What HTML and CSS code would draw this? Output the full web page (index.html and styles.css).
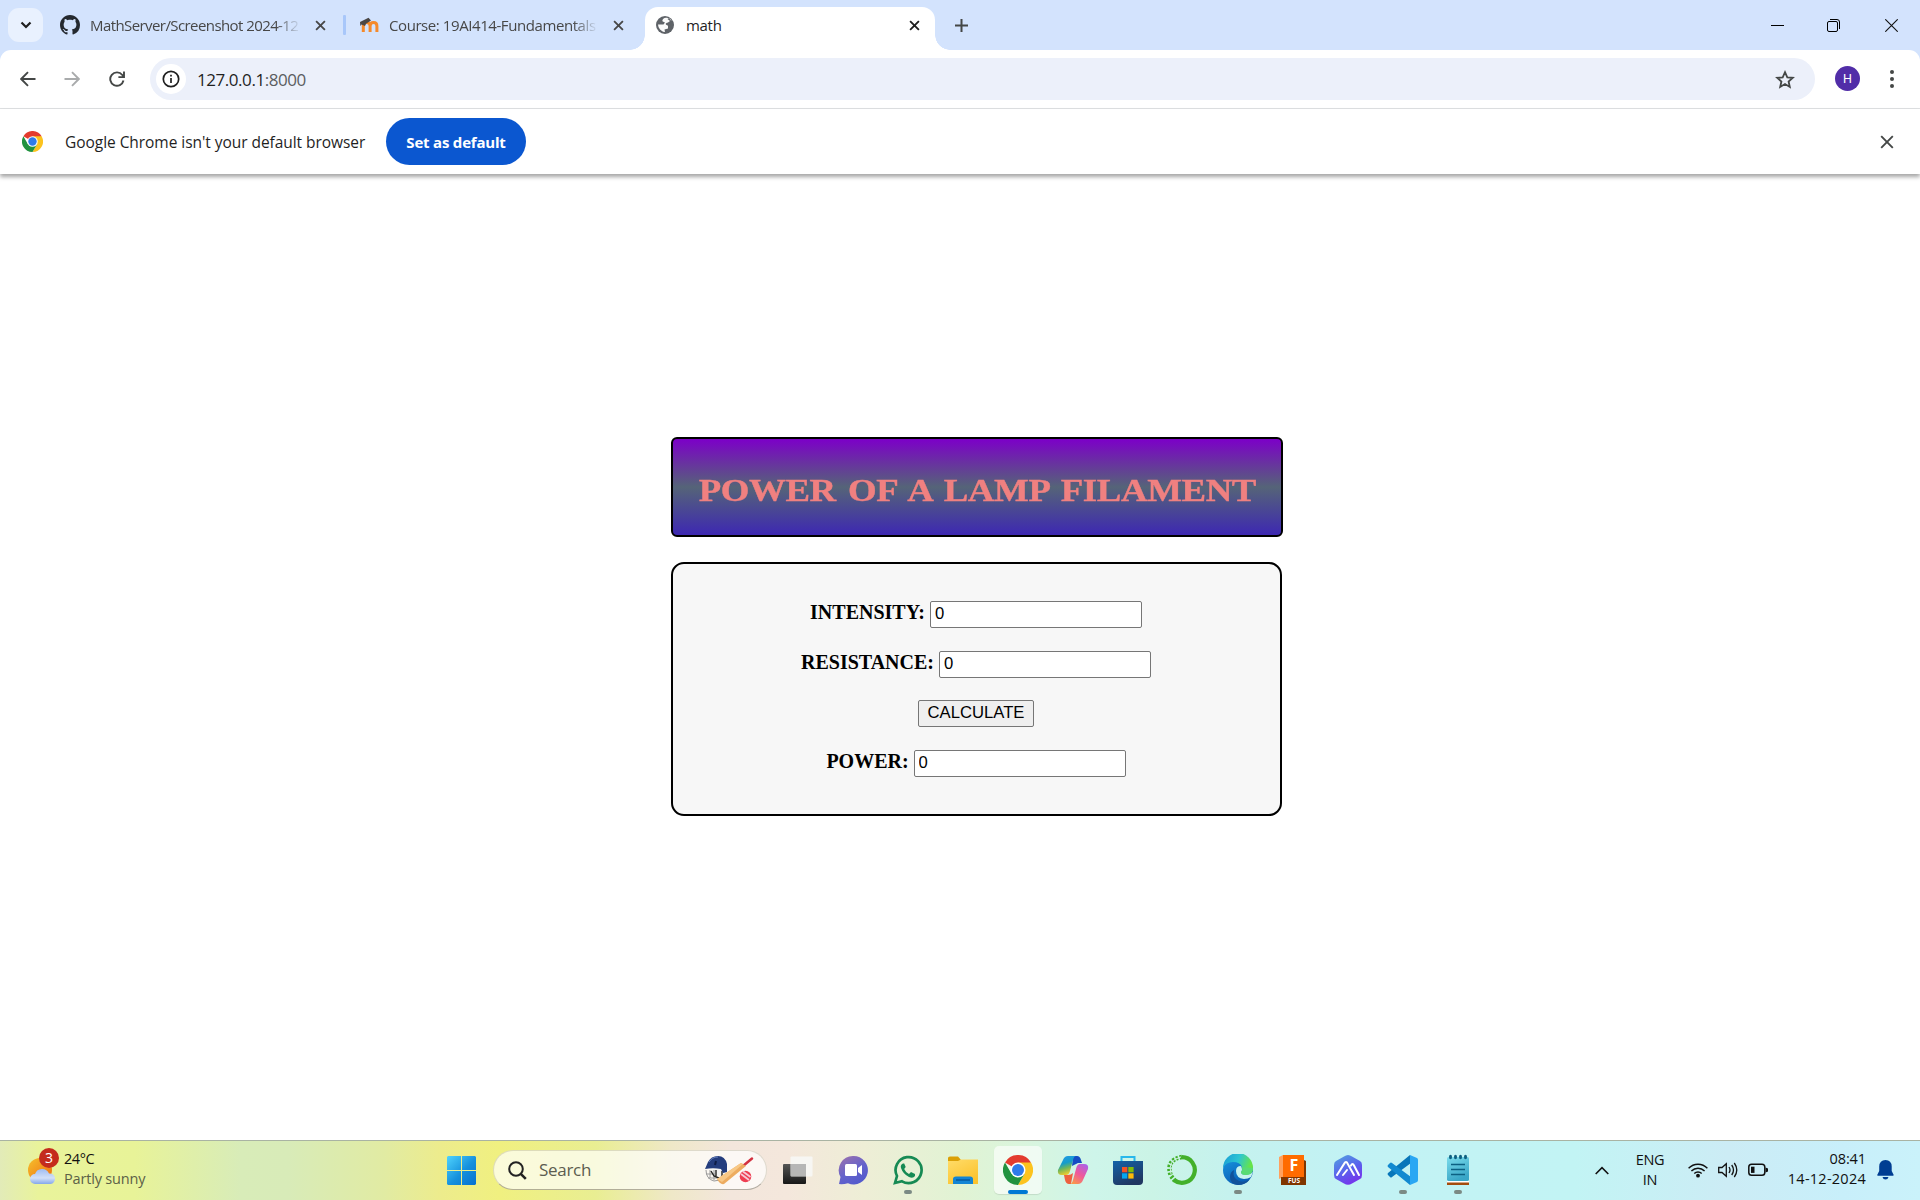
FILE: index.html
```html
<!DOCTYPE html>
<html lang="en">
<head>
<meta charset="utf-8">
<title>math</title>
<link rel="stylesheet" href="styles.css">
</head>
<body>
<svg class="defs" width="0" height="0">
  <defs>
    <symbol id="x" viewBox="0 0 12 12"><path d="M1.2 1.2l9.6 9.6M10.8 1.2l-9.6 9.6" fill="none" stroke="currentColor" stroke-width="2"/></symbol>
    <symbol id="chrome" viewBox="0 0 48 48">
      <path d="M24 24L3.2 12A24 24 0 0 1 44.8 12z" fill="#e33b2e"/>
      <path d="M24 12h20.8A24 24 0 0 1 24 48l10.4-18z" fill="#fcc31e"/>
      <path d="M3.2 12A24 24 0 0 0 24 48l10.4-18L24 24l-10.4 6z" fill="#21923f"/>
      <circle cx="24" cy="24" r="12" fill="#fff"/><circle cx="24" cy="24" r="9.6" fill="#2f7bea"/>
    </symbol>
  </defs>
</svg>

<header class="tabstrip">
  <button class="tab-search"><svg width="12" height="8" viewBox="0 0 12 8"><path d="M1.5 1.5L6 6l4.500-4.500" fill="none" stroke="#1f1f1f" stroke-width="2.200"/></svg></button>
  <div class="tab tab-one">
    <svg width="20" height="20" viewBox="0 0 16 16"><path fill="#24292f" d="M8 0C3.580 0 0 3.580 0 8c0 3.540 2.290 6.530 5.470 7.590.4.070.55-.17.55-.38 0-.19-.01-.82-.01-1.490-2.010.37-2.530-.49-2.690-.94-.09-.23-.48-.94-.82-1.130-.28-.15-.68-.52-.01-.53.63-.01 1.080.58 1.230.82.72 1.210 1.870.87 2.330.66.070-.52.28-.87.51-1.070-1.780-.2-3.640-.89-3.640-3.950 0-.87.31-1.590.82-2.150-.08-.2-.36-1.020.08-2.120 0 0 .67-.21 2.200.82.64-.18 1.320-.27 2-.27s1.360.09 2 .27c1.530-1.040 2.200-.82 2.200-.82.44 1.100.16 1.920.08 2.120.51.56.82 1.270.82 2.150 0 3.070-1.870 3.750-3.650 3.950.29.25.54.73.54 1.480 0 1.070-.01 1.930-.01 2.200 0 .21.15.46.55.38A8 8 0 0 0 16 8c0-4.420-3.580-8-8-8z"/></svg>
    <span class="tab-title faded">MathServer/Screenshot 2024-12</span>
    <svg class="tab-x" width="11" height="11"><use href="#x"/></svg>
  </div>
  <i class="tab-sep"></i>
  <div class="tab tab-two">
    <svg width="20" height="16" viewBox="0 0 20 16"><path d="M4.300 15V8M4.300 9q0-3.500 3.400-3.500T11.100 9V15M11.100 9q0-3.500 3.400-3.500T17.900 9V15" fill="none" stroke="#f58a2b" stroke-width="3"/><path d="M1 5L9.500.8l2.500 2.700L7 6.800 6 9 2.500 7.500 1.300 9z" fill="#4a4746"/></svg>
    <span class="tab-title faded course">Course: 19AI414-Fundamentals</span>
    <svg class="tab-x" width="11" height="11"><use href="#x"/></svg>
  </div>
  <div class="tab tab-active">
    <svg width="18" height="18" viewBox="0 0 18 18"><circle cx="9" cy="9" r="9" fill="#5f6368"/><path d="M10 1.800Q6.500 2 6.300 5.300L9 6.500 7.500 8.500H2Q2 11 4 13.500L7 15.800 9 16l-.5-2.500 3.500-1V9.700L9.600 8.500 12 7h2.500l.8-3Q13 1.500 10 1.800z" fill="#fff" opacity=".97"/><path d="M6.500 2.500Q3 4 2.200 7.500H7L8 6.600 5 5zM11.500 3l2.500 2-2 1.500-2.500.8 3.500 2.500-1 3.200-3 1.200v2.600q5-.5 6.800-5.300T13 2z" fill="#5f6368"/></svg>
    <span class="tab-title">math</span>
    <svg class="tab-x" width="11" height="11"><use href="#x"/></svg>
  </div>
  <svg class="new-tab" width="13" height="13" viewBox="0 0 13 13"><path d="M6.500 0v13M0 6.500h13" stroke="#444746" stroke-width="2"/></svg>
  <div class="win-controls">
    <svg width="13" height="13" viewBox="0 0 13 13"><path d="M0 6.500h13" stroke="#000"/></svg>
    <svg width="13" height="13" viewBox="0 0 13 13"><rect x=".5" y="2.500" width="10" height="10" rx="1.500" fill="none" stroke="#000"/><path d="M3 .5h7q2.500 0 2.500 2.500v7" fill="none" stroke="#000"/></svg>
    <svg width="13" height="13" viewBox="0 0 13 13"><path d="M.3.3l12.400 12.400M12.700.3L.3 12.700" stroke="#111" stroke-width="1.100"/></svg>
  </div>
</header>

<div class="chrome-body">
  <nav class="toolbar">
    <svg class="nav-icon" width="16" height="16" viewBox="0 0 16 16"><path d="M15.500 8H1.500M8 1.200L1.200 8 8 14.800" fill="none" stroke="#444746" stroke-width="1.900"/></svg>
    <svg class="nav-icon" width="16" height="16" viewBox="0 0 16 16"><path d="M.5 8h14M8 1.200L14.800 8 8 14.800" fill="none" stroke="#a9abac" stroke-width="1.900"/></svg>
    <svg class="nav-icon" width="16" height="16" viewBox="0 0 16 16"><path d="M14.500 9.500A6.700 6.700 0 1 1 13.300 4L15 5.900M15 .5v5.600H9.400" fill="none" stroke="#444746" stroke-width="1.900"/></svg>
    <div class="omnibox">
      <span class="site-info"><svg width="18" height="18" viewBox="0 0 18 18"><circle cx="9" cy="9" r="7.700" fill="none" stroke="#1f1f1f" stroke-width="1.700"/><path d="M9 8v5M9 4.800v1.700" stroke="#1f1f1f" stroke-width="1.700"/></svg></span>
      <span class="url">127.0.0.1<span class="port">:8000</span></span>
      <svg class="star" width="20" height="19" viewBox="0 0 20 19"><path d="M10 2.200l2.300 5.100 5.500.5-4.200 3.700 1.200 5.500L10 14.100 5.200 17l1.200-5.500-4.200-3.700 5.500-.5z" fill="none" stroke="#444746" stroke-width="1.800"/></svg>
    </div>
    <span class="avatar">H</span>
    <svg class="dots" width="4" height="18" viewBox="0 0 4 18"><g fill="#444746"><circle cx="2" cy="2" r="2"/><circle cx="2" cy="9" r="2"/><circle cx="2" cy="16" r="2"/></g></svg>
  </nav>
  <div class="infobar">
    <svg class="info-logo" width="21" height="21"><use href="#chrome"/></svg>
    <span class="info-text">Google Chrome isn't your default browser</span>
    <button class="set-default"><span>Set as default</span></button>
    <svg class="info-x" width="14" height="14" viewBox="0 0 14 14"><path d="M1.200 1.200l11.600 11.600M12.800 1.200L1.200 12.800" stroke="#444746" stroke-width="1.900"/></svg>
  </div>
</div>

<main class="page">
  <section class="math">
    <div class="title-box"><h1>POWER OF A LAMP FILAMENT</h1></div>
    <form class="calc">
      <div class="field"><label for="i">INTENSITY:</label><input id="i" type="text" value="0"></div>
      <div class="field"><label for="r">RESISTANCE:</label><input id="r" type="text" value="0"></div>
      <div class="field"><button class="calculate" type="button">CALCULATE</button></div>
      <div class="field"><label for="p">POWER:</label><input id="p" type="text" value="0"></div>
    </form>
  </section>
</main>

<footer class="taskbar">
  <div class="weather">
    <div class="weather-icon">
      <svg width="30" height="30" viewBox="0 0 30 30">
        <defs><linearGradient id="sun" x2="1" y2="1"><stop stop-color="#f5c02c"/><stop offset="1" stop-color="#f06a10"/></linearGradient><linearGradient id="cloud" x2="0" y2="1"><stop stop-color="#9fbcf2"/><stop offset=".6" stop-color="#d3e0f8"/><stop offset="1" stop-color="#84a8ea"/></linearGradient></defs>
        <circle cx="12" cy="14" r="12" fill="url(#sun)"/>
        <path d="M7 28a5 5 0 0 1 0-10 7.500 7.500 0 0 1 14-.5A5.300 5.300 0 0 1 22.500 28z" fill="url(#cloud)"/>
      </svg>
      <span class="badge">3</span>
    </div>
    <div class="weather-text"><span>24°C</span><span class="muted">Partly sunny</span></div>
  </div>

  <svg class="start" width="29" height="29" viewBox="0 0 29 29"><defs><linearGradient id="win" x2="1" y2="1"><stop stop-color="#4fd3fd"/><stop offset=".55" stop-color="#1590dc"/><stop offset="1" stop-color="#0670cf"/></linearGradient></defs><path fill="url(#win)" d="M1 0h13v14H0V1zM15 0h13l1 1v13H15zM0 15h14v14H1l-1-1zM15 15h14v13l-1 1H15z"/></svg>

  <div class="search">
    <svg width="19" height="19" viewBox="0 0 19 19"><circle cx="8" cy="8" r="6.800" fill="none" stroke="#222" stroke-width="2"/><path d="M12.800 12.800l5 5" stroke="#222" stroke-width="2.600"/></svg>
    <span>Search</span>
    <svg class="cricket" width="50" height="30" viewBox="0 0 50 30">
      <path d="M7 15l3 4 8 3 4-5V12z" fill="#f4f4f4"/>
      <path d="M2 15q0 9 8 11l6-1M2 19h9M4 23h9M6 15v8M10 15v10" fill="none" stroke="#9a9a9a" stroke-width="1"/>
      <path d="M7 16l3 5 7 3M12 15v6M18 16v6" fill="none" stroke="#222" stroke-width="1.400"/>
      <path d="M1 14L4 7Q7 1 14 1t9 8v8l-4 1-2-4q-8-1.500-16 0z" fill="#243d7d"/><path d="M12 6l-1 4" stroke="#0e1d47" stroke-width="2"/><path d="M5 7Q8 2 14 2" stroke="#6580bd" fill="none"/>
      <path d="M39 11l9-7.500" stroke="#d33140" stroke-width="2.500" stroke-linecap="round"/>
      <path d="M13 24L37 8l5 3L20 29q-4 1-7-5z" fill="#edac60"/><path d="M13 24L37 8l2 1-21 18z" fill="#f8c886"/>
      <circle cx="41.500" cy="21.500" r="5.800" fill="#ee3e52"/><path d="M37 19l8 6M39 16.500l7.500 5.500" stroke="#f6cbd8" stroke-width="1.800"/>
    </svg>
  </div>

  <div class="apps">
    <span class="app"><svg width="32" height="32" viewBox="0 0 32 32"><defs><linearGradient id="tv" x2="0" y2="1"><stop stop-color="#555"/><stop offset="1" stop-color="#171717"/></linearGradient></defs><rect x="1" y="10" width="23" height="20" rx="1" fill="url(#tv)"/><rect x="8.500" y="2.500" width="22" height="20" rx="1" fill="#f7f7f5" opacity=".9"/><path d="M9 10h15v12H9z" fill="#aaa" opacity=".8"/></svg></span>
    <span class="app"><svg width="32" height="32" viewBox="0 0 32 32"><defs><linearGradient id="chat" x1=".2" x2=".8" y2="1"><stop stop-color="#9770b0"/><stop offset=".5" stop-color="#6663cb"/><stop offset="1" stop-color="#5059cd"/></linearGradient></defs><path d="M16.500 2a14.200 14.200 0 1 1-5.500 27.200Q6 30.500 2 30l1.500-7A14.200 14.200 0 0 1 16.500 2z" fill="url(#chat)"/><rect x="8" y="10" width="12" height="12" rx="1.500" fill="#fff"/><path d="M21 14l4-3v10l-4-3z" fill="#fff"/></svg></span>
    <span class="app run"><svg width="32" height="32" viewBox="0 0 32 32"><path d="M3 29l2-7A13 13 0 1 1 10 27.300z" fill="none" stroke="#168a54" stroke-width="2.700"/><path d="M11 9.500Q8 11 9 14q2 6 8 9 4 2 6-1v-2l-4-2-2 2q-3-1-4.800-5l1.500-2-1.500-3.500z" fill="#168a54"/></svg></span>
    <span class="app"><svg width="32" height="32" viewBox="0 0 32 32"><defs><linearGradient id="fold" x2=".6" y2="1"><stop stop-color="#ffdc69"/><stop offset="1" stop-color="#fbc32e"/></linearGradient></defs><path d="M1 4q0-1.500 2-1.500h8l3 3.500v3H1z" fill="#dba006"/><path d="M1 7h10l3-1.500h17V30H1z" fill="url(#fold)"/><path d="M6 30v-5q0-2.500 3-2.500h14q3 0 3 2.500v5z" fill="#1385d4"/><path d="M9 26h14" stroke="#075a9f" stroke-width="1.500"/></svg></span>
    <span class="app run current"><svg width="30" height="30"><use href="#chrome"/></svg></span>
    <span class="app"><svg width="32" height="32" viewBox="0 0 32 32"><defs><linearGradient id="cpa" x2=".3" y2="1"><stop stop-color="#249bea"/><stop offset=".45" stop-color="#159cca"/><stop offset=".7" stop-color="#6eb65b"/><stop offset="1" stop-color="#e6ca30"/></linearGradient><linearGradient id="cpb" x1=".8" x2=".2" y2="1"><stop stop-color="#ad60e6"/><stop offset=".5" stop-color="#ef589b"/><stop offset="1" stop-color="#fa9949"/></linearGradient></defs><path d="M16 2h4q3 0 4 4l1 3h-4l-6 3z" fill="#154dc4"/><path d="M6 6q1.500-4 5-4h8q-2 0-3 4l-3 11q-1 4-4 4H5q-5 0-4-5z" fill="url(#cpa)"/><path d="M7 21h4q3 0 5-2l-2 11h-2q-3 0-4-4z" fill="#ee603f"/><path d="M26 26q-1.500 4-5 4h-8q2 0 3-4l3-11q1-5 4-5h4q5 0 4 5z" fill="url(#cpb)"/></svg></span>
    <span class="app"><svg width="32" height="32" viewBox="0 0 32 32"><defs><linearGradient id="store" x2=".5" y2="1"><stop stop-color="#1262a9"/><stop offset="1" stop-color="#203761"/></linearGradient></defs><path d="M9.500 8V3h13v5" fill="none" stroke="#28b8eb" stroke-width="2"/><path d="M1 7h30v20q0 4-4 4H5q-4 0-4-4z" fill="url(#store)"/><path d="M10 13h5.300v5.300H10z" fill="#f35325"/><path d="M16.300 13h5.300v5.300h-5.300z" fill="#81bc06"/><path d="M10 19.300h5.300v5.300H10z" fill="#05a6f0"/><path d="M16.300 19.300h5.300v5.300h-5.300z" fill="#ffba08"/></svg></span>
    <span class="app"><svg width="32" height="32" viewBox="0 0 32 32"><path d="M15 3.200A12.800 12.800 0 1 1 7 26" fill="none" stroke="#43b02a" stroke-width="4.200"/><path d="M15 3Q-2 6 4 22l4 5" fill="none" stroke="#43b02a" stroke-width="4.500" stroke-dasharray="2.200 1.600"/><path d="M14 3Q0 6 4 20" fill="none" stroke="#d1f1e5" stroke-width="1"/></svg></span>
    <span class="app run"><svg width="32" height="32" viewBox="0 0 32 32"><defs><linearGradient id="ea" x2="1" y2=".3"><stop stop-color="#169ad6"/><stop offset=".55" stop-color="#2cc5d3"/><stop offset="1" stop-color="#66e547"/></linearGradient><linearGradient id="eb" x2=".5" y2="1"><stop stop-color="#199be3"/><stop offset="1" stop-color="#0a5db5"/></linearGradient></defs><circle cx="16" cy="16" r="15" fill="url(#eb)"/><path d="M1 14A15 15 0 0 1 31 14q0 7-7 7-5 0-5-3 2-2 1-5-2-5-9-5Q4 8 1 14z" fill="url(#ea)"/><path d="M12 16q-2 8 5 11 6 2 11-2-4 6-12 6-8-1-8-8 0-5 4-7z" fill="#11529b"/><path d="M19 12q-5 0-5 5 0 7 8 8 4 0 7-2l2-5q-3 3-7 3-5 0-5-3 2-2 0-6z" fill="#c7f2ef"/><path d="M31 14q0 7-7 7-5 0-5-3 2-2 1-5z" fill="#58db75"/></svg></span>
    <span class="app"><svg width="32" height="32" viewBox="0 0 32 32"><path d="M2 3l4-2v22l-4 2z" fill="#ffa15e"/><path d="M6 1h21v23H6z" fill="#ff6b00"/><path d="M27 6l2 1v24H4v-8h23z" fill="#803600"/><text x="17" y="17" class="fus-f">F</text><text x="17" y="28.500" class="fus-s">FUS</text></svg></span>
    <span class="app"><svg width="32" height="32" viewBox="0 0 32 32"><defs><linearGradient id="am" x2=".5" y2="1"><stop stop-color="#53a5df"/><stop offset=".6" stop-color="#5a61ed"/><stop offset="1" stop-color="#7437ec"/></linearGradient></defs><path d="M16 1q2 0 4 1.500l8 4.500q2 1 2 4v10q0 3-2 4l-8 4.500q-4 2.500-8 0L4 25q-2-1-2-4V11q0-3 2-4l8-4.500Q14 1 16 1z" fill="url(#am)"/><path d="M5 21l8-12.500q1-1 2 0L22 21M19 11.500q1.500-3 3 0L27 21M11 21l4-5" fill="none" stroke="#fff" stroke-width="2" stroke-linecap="round"/></svg></span>
    <span class="app run"><svg width="32" height="32" viewBox="0 0 32 32"><path d="M23 1l1 8L5 23q-1 1-2 0l-2-2q-1-1 0-2z" fill="#0876b9"/><path d="M23 31l1-8L5 9Q4 8 3 9l-2 2q-1 1 0 2z" fill="#1289d0"/><path d="M23 1l7 3q1 .5 1 2v20q0 1.500-1 2l-7 3z" fill="#2aa7f3"/></svg></span>
    <span class="app run"><svg width="32" height="32" viewBox="0 0 32 32"><defs><linearGradient id="note" x2=".4" y2="1"><stop stop-color="#7bdcec"/><stop offset="1" stop-color="#39a6c7"/></linearGradient></defs><path d="M5 27h22v4H5z" fill="#a34c0e"/><path d="M5 26h22v2.500H5z" fill="#fff"/><rect x="5" y="3" width="22" height="24" rx="1.500" fill="url(#note)"/><path d="M9 10.500h14M9 15.500h14M9 20.500h14" stroke="#0c6082" stroke-width="1.600"/><g fill="#0e5f80"><ellipse cx="8.500" cy="3" rx="1.500" ry="2.200"/><ellipse cx="13.500" cy="3" rx="1.500" ry="2.200"/><ellipse cx="18.500" cy="3" rx="1.500" ry="2.200"/><ellipse cx="23.500" cy="3" rx="1.500" ry="2.200"/></g></svg></span>
  </div>

  <div class="tray">
    <svg class="chevron" width="14" height="9" viewBox="0 0 14 9"><path d="M.7 8L7 1.700 13.300 8" fill="none" stroke="#111" stroke-width="1.600"/></svg>
    <div class="lang"><span>ENG</span><span>IN</span></div>
    <div class="status">
      <svg width="20" height="16" viewBox="0 0 20 16"><g fill="none" stroke="#111" stroke-width="1.400"><path d="M.6 6.200a13 13 0 0 1 18.800 0M3.400 9a9.300 9.300 0 0 1 13.200 0M6.300 11.500a5.300 5.300 0 0 1 7.400 0"/></g><circle cx="10" cy="13.700" r="1.900" fill="#111"/></svg>
      <svg width="20" height="16" viewBox="0 0 20 16"><g fill="none" stroke="#111" stroke-width="1.300"><path d="M.7 5.500H4L8.300 1.700v12.600L4 10.500H.7zM11 5q2 3 0 6M13.700 3q3.600 5 0 10M16.300 1q5 7 0 14"/></g></svg>
      <svg width="20" height="14" viewBox="0 0 20 14"><rect x=".8" y="1.300" width="16" height="11" rx="2.800" fill="none" stroke="#111" stroke-width="1.500"/><path d="M3 3.700h3.500v6.200H3z" fill="#111"/><path d="M17.500 4.500l2.500 1v3l-2.500 1z" fill="#111"/></svg>
    </div>
    <div class="clock"><span>08:41</span><span class="date">14-12-2024</span></div>
    <svg class="bell" width="17" height="20" viewBox="0 0 17 20"><path d="M8.500 0q6 0 6.200 6.500V11l2 4q0 .8-.8.800H1q-.9 0-.8-.8l2-4V6.500Q2.500 0 8.500 0zM5.500 17h6q-.6 2.500-3 2.500t-3-2.500z" fill="#003d92"/></svg>
  </div>
</footer>
</body>
</html>
```

FILE: styles.css
```css
* { box-sizing: border-box; }
html, body { height: 100%; }
body {
  margin: 0;
  height: 1200px;
  overflow: hidden;
  display: flex;
  flex-direction: column;
  background: #fff;
  color: #1f1f1f;
  font-family: "Open Sans", "Noto Sans", sans-serif;
  font-size: 15px;
}
svg { display: block; flex: none; }
button { font: inherit; border: 0; padding: 0; }
span { white-space: nowrap; }
.defs { position: absolute; }

/* Tab strip */
.tabstrip {
  height: 50px;
  flex: none;
  display: flex;
  align-items: center;
  background: #d3e3fd;
}
.tab-search {
  width: 35px;
  height: 34px;
  margin-left: 8px;
  border-radius: 11px;
  background: #e9f1fe;
  display: grid;
  place-items: center;
}
.tab { display: flex; align-items: center; color: #474747; }
.tab-one { width: 300px; padding-left: 17px; }
.tab-two { width: 300px; padding-left: 14px; margin-left: -1px; }
.tab-title {
  flex: none;
  margin-left: 10px;
  width: 211px;
  overflow: hidden;
  letter-spacing: -0.58px;
  line-height: 22px;
}
.tab-title.course { width: 209px; letter-spacing: -0.42px; }
.faded { mask-image: linear-gradient(90deg, #000 88%, transparent 100%); }
.tab-x { margin-left: 14px; color: #474747; }
.tab-two .tab-x { margin-left: 15px; }
.tab-sep { width: 3px; height: 20px; background: #a8c7fa; border-radius: 1px; }
.tab-active {
  width: 290px;
  height: 43px;
  margin: 7px 0 0 0;
  padding: 0 15px 7px 11px;
  background: #fff;
  border-radius: 13px 13px 0 0;
  position: relative;
  color: #1f1f1f;
}
.tab-active::before, .tab-active::after {
  content: "";
  position: absolute;
  bottom: 0;
  width: 15px;
  height: 15px;
}
.tab-active::before { left: -15px; background: radial-gradient(circle at 0 0, transparent 14.5px, #fff 15px); }
.tab-active::after { right: -15px; background: radial-gradient(circle at 100% 0, transparent 14.5px, #fff 15px); }
.tab-active .tab-title { margin-left: 12px; letter-spacing: -0.3px; }
.tab-active .tab-x { margin-left: auto; color: #1f1f1f; }
.new-tab { margin-left: 20px; }
.win-controls { margin-left: auto; display: flex; gap: 43px; padding-right: 22px; }
.win-controls svg:last-child { margin-left: 2px; }

/* Toolbar and info bar */
.chrome-body { flex: none; background: #d3e3fd; }
.toolbar {
  height: 59px;
  display: flex;
  align-items: center;
  background: #fff;
  border-radius: 11px 11px 0 0;
  border-bottom: 1px solid #dfe1e3;
  padding-left: 20px;
}
.nav-icon { margin-right: 28px; }
.nav-icon:nth-child(2) { margin-right: 29px; }
.nav-icon:nth-child(3) { margin-right: 25px; }
.omnibox {
  width: 1665px;
  height: 42px;
  border-radius: 21px;
  background: #ecf0fa;
  display: flex;
  align-items: center;
  padding: 0 20px 0 6px;
}
.site-info {
  width: 30px;
  height: 30px;
  border-radius: 50%;
  background: #fff;
  display: grid;
  place-items: center;
}
.url { margin-left: 11px; font-size: 17px; letter-spacing: -0.45px; }
.port { color: #5b5d60; }
.star { margin-left: auto; }
.avatar {
  width: 25px;
  height: 25px;
  margin-left: 20px;
  margin-bottom: 1px;
  border-radius: 50%;
  background: #512da8;
  color: #fff;
  font: 12.5px/25px Roboto, sans-serif;
  text-align: center;
}
.dots { margin-left: 30px; margin-bottom: 1px; }
.infobar {
  height: 65px;
  display: flex;
  align-items: center;
  background: #fff;
  padding: 0 26px 0 22px;
  box-shadow: 0 3px 4px rgba(0, 0, 0, .35);
}
.info-logo { margin-bottom: 1px; }
.info-text { width: 304px; margin-left: 22px; letter-spacing: -0.05px; font-size: 15.5px; }
.set-default {
  width: 140px;
  height: 47px;
  margin-left: 17px;
  border-radius: 24px;
  background: #0b57d0;
  color: #fff;
  font-weight: 700;
  letter-spacing: -0.2px;
}
.info-x { margin-left: auto; }

/* Page */
.page { flex: 1; display: flex; flex-direction: column; padding: 263px 0 0 671px; }
.math { width: 612px; }
.title-box {
  height: 100px;
  border: 2px solid #000;
  border-radius: 6px;
  background: linear-gradient(#7c00c8, #556478 50%, #3d28b2);
  display: grid;
  place-items: center;
  overflow: hidden;
}
h1 {
  margin: 5px 0 0;
  color: #f08080;
  font: bold 32px/38px "Liberation Serif", serif;
  white-space: nowrap;
  word-spacing: 3px;
  letter-spacing: -0.33px;
  -webkit-text-stroke: 0.4px #f08080;
  transform: scaleX(1.15);
}
.calc {
  width: 611px;
  height: 254px;
  margin-top: 25px;
  padding-top: 36px;
  border: 2px solid #000;
  border-radius: 13px;
  background: #f7f7f7;
}
.field {
  height: 49.5px;
  padding: 1px 1px 0 0;
  display: flex;
  justify-content: center;
  color: #000;
  font: bold 20px/22px "Liberation Serif", serif;
}
.field label { margin-right: 5px; }
.field input, .calculate {
  height: 27px;
  border: 1px solid #767676;
  border-radius: 2px;
  color: #000;
  font: 16.67px/20px "Liberation Sans", sans-serif;
}
.field input { width: 212px; padding: 0 4px 1px; background: #fff; }
.calculate { width: 116px; background: #efefef; padding-bottom: 2px; }

/* Taskbar */
.taskbar {
  height: 60px;
  flex: none;
  display: flex;
  align-items: center;
  border-top: 1px solid #a9b3a3;
  font-size: 15px;
  line-height: 20px;
  background: linear-gradient(90deg, #e2ebb8 0, #e9f39b 2%, #e8f398 7%, #d8ecb8 12.500%, #d8ebb8 15%, #e1eba3 20%, #edec8c 23%, #f0f080 26%, #e9ee92 31%, #efe8c8 35%, #f3e6dc 38%, #f4e7dc 41%, #eeeed6 45%, #e1f3d4 50%, #daf5dc 53%, #cef5ea 57%, #cbf4e6 60%, #c5f2ee 64%, #c2f2f4 70%, #c2f4f4 82%, #ccecf5 90%, #c8effa 96%, #caf2fa 100%);
}
.weather { width: 419px; height: 59px; margin-left: 28px; display: flex; align-items: center; }
.weather-icon { position: relative; width: 36px; }
.badge {
  position: absolute;
  left: 11px;
  top: -8px;
  width: 20px;
  height: 20px;
  border-radius: 50%;
  background: #c42b1c;
  color: #fff;
  font-size: 14px;
  line-height: 20px;
  text-align: center;
}
.weather-text { display: flex; flex-direction: column; padding-bottom: 3px; letter-spacing: -0.45px; font-size: 14.5px; color: #111; }
.weather-text .muted { color: #5c6148; letter-spacing: -0.18px; }
.start, .apps { margin-bottom: 1px; }
.search {
  width: 274px;
  height: 40px;
  margin: 0 0 1px 17px;
  padding: 0 12px 0 14px;
  border: 1px solid rgba(120, 110, 70, .22);
  border-bottom-color: rgba(80, 70, 50, .42);
  border-radius: 20px;
  background: rgba(255, 255, 255, .7);
  display: flex;
  align-items: center;
}
.search span { margin-left: 12px; font-size: 17px; color: #5c5d50; letter-spacing: -0.3px; }
.cricket { margin-left: auto; }
.apps { display: flex; margin-left: 3px; }
.app { width: 55px; height: 58px; display: grid; place-items: center; position: relative; }
.app.run::after {
  content: "";
  position: absolute;
  left: 24px;
  bottom: 5px;
  width: 8px;
  height: 4px;
  border-radius: 2px;
  background: #7b8a84;
}
.app.current::before {
  content: "";
  position: absolute;
  inset: 5px 3px 5px 4px;
  border-radius: 5px;
  background: rgba(255, 255, 255, .62);
  box-shadow: 0 1px 1px rgba(0, 0, 0, .1);
}
.app.current svg { position: relative; }
.app.current::after { left: 18px; width: 20px; background: #0078d4; }
.fus-f { font: bold 16px "Open Sans", sans-serif; fill: #fff; text-anchor: middle; }
.fus-s { font: bold 6.5px "Open Sans", sans-serif; fill: #fff; text-anchor: middle; }
.tray { margin-left: auto; padding-bottom: 1px; display: flex; align-items: center; color: #111; font-size: 14.5px; letter-spacing: -0.3px; }
.lang { width: 34px; margin-left: 24px; text-align: center; display: flex; flex-direction: column; }
.status { display: flex; align-items: center; gap: 10px; margin-left: 21px; }
.clock { width: 90px; margin-left: 8px; padding-bottom: 2px; text-align: right; display: flex; flex-direction: column; letter-spacing: -0.1px; }
.date { letter-spacing: 0.25px; }
.bell { margin: 0 26px 0 11px; }
```
